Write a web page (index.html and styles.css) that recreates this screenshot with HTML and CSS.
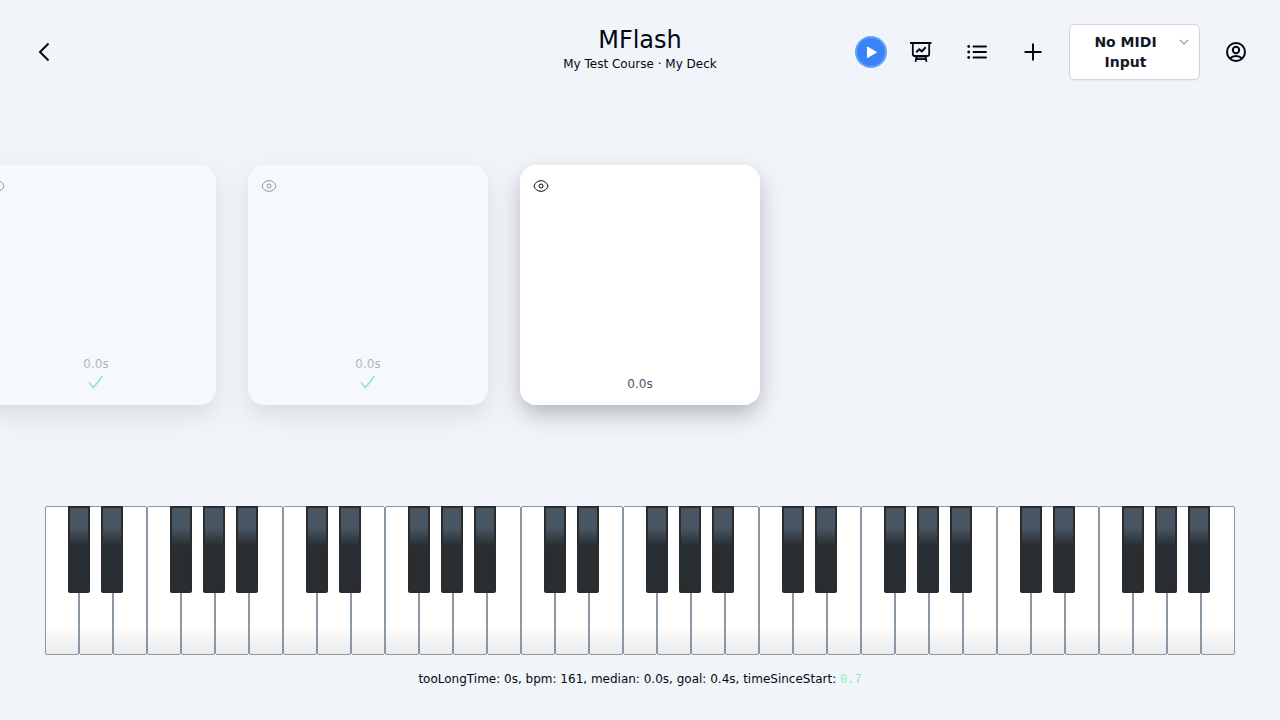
FILE: index.html
```html
<!DOCTYPE html>
<html lang="en">
<head>
<meta charset="utf-8">
<meta name="viewport" content="width=device-width, initial-scale=1">
<title>MFlash</title>
<link rel="stylesheet" href="styles.css">
</head>
<body>
<header class="topbar">
  <div class="topbar-start">
    <a class="icon-button" href="#" aria-label="Back">
      <svg width="24" height="24" viewBox="0 0 24 24" fill="none" stroke="currentColor" stroke-width="2"><path d="M16.500 3.500 8 12l8.500 8.500"/></svg>
    </a>
  </div>
  <div class="titles">
    <h1 class="title">MFlash</h1>
    <p class="subtitle">My Test Course · My Deck</p>
  </div>
  <div class="topbar-end">
    <button class="play-button" type="button" aria-label="Play">
      <svg width="28" height="28" viewBox="0 0 28 28" fill="#fff" stroke="#fff" stroke-width="1" stroke-linejoin="round"><path d="M10.500 9v10.500l9-5.250z"/></svg>
    </button>
    <button class="icon-button" type="button" aria-label="Statistics">
      <svg width="24" height="24" viewBox="0 0 24 24" fill="none" stroke="currentColor" stroke-width="2"><path d="M1 3h21.500"/><path d="M3.800 3v11a2 2 0 0 0 2 2h12.400a2 2 0 0 0 2-2V3" stroke-width="1.800"/><path d="m7.300 12.300 3-3 2.500 2 4-4"/><path d="m7.500 16.500-1 5.300M16.500 16.500l1 5.300M7 19.200h10" stroke-width="1.800"/><path d="M8 16.500h8v2H8z" fill="currentColor" fill-opacity=".5" stroke="none"/></svg>
    </button>
    <button class="icon-button" type="button" aria-label="List">
      <svg width="24" height="24" viewBox="0 0 24 24" fill="none" stroke="currentColor" stroke-width="2"><path d="M8.500 6.500H21M8.500 12H21M8.500 17.500H21" stroke-linecap="round"/><g fill="currentColor" stroke="none"><circle cx="3.700" cy="6.500" r="1.400"/><circle cx="3.700" cy="12" r="1.400"/><circle cx="3.700" cy="17.500" r="1.400"/></g></svg>
    </button>
    <button class="icon-button" type="button" aria-label="Add">
      <svg width="24" height="24" viewBox="0 0 24 24" fill="none" stroke="currentColor" stroke-width="2"><path d="M12 3.500v17M3.500 12h17"/></svg>
    </button>
    <button class="midi-button" type="button" aria-haspopup="listbox">
      <span class="midi-label">No MIDI Input</span>
      <svg class="midi-chevron" width="10" height="20" viewBox="0 0 10 20" fill="none" stroke="currentColor" stroke-width="1.300"><path d="m1 8 4 4 4-4"/></svg>
    </button>
    <button class="icon-button" type="button" aria-label="Account">
      <svg width="24" height="24" viewBox="0 0 24 24" fill="none" stroke="currentColor" stroke-width="2"><circle cx="12" cy="12" r="9"/><circle cx="12" cy="10" r="3.200"/><path d="M6 18.500q2.300-2.500 6-2.500t6 2.500"/></svg>
    </button>
  </div>
</header>

<main class="stage">
  <section class="cards" aria-label="Cards">
    <article class="card card-done">
      <button class="eye-button" type="button" aria-label="Show card"><svg width="16" height="16" viewBox="0 0 16 16" fill="none" stroke="currentColor"><path d="M1 8C2.200 4.500 4.700 2.700 8 2.700S13.800 4.500 15 8C13.800 11.500 11.300 13.300 8 13.300S2.200 11.500 1 8z"/><circle cx="8" cy="8" r="2"/></svg></button>
      <div class="card-result">
        <span>0.0s</span>
        <svg class="check" width="18" height="18" viewBox="-1 0 18 18" fill="none" stroke="currentColor" stroke-width="1.600"><path d="m1 8.500 4.500 5L14.500 2"/></svg>
      </div>
    </article>
    <article class="card card-done">
      <button class="eye-button" type="button" aria-label="Show card"><svg width="16" height="16" viewBox="0 0 16 16" fill="none" stroke="currentColor"><path d="M1 8C2.200 4.500 4.700 2.700 8 2.700S13.800 4.500 15 8C13.800 11.500 11.300 13.300 8 13.300S2.200 11.500 1 8z"/><circle cx="8" cy="8" r="2"/></svg></button>
      <div class="card-result">
        <span>0.0s</span>
        <svg class="check" width="18" height="18" viewBox="-1 0 18 18" fill="none" stroke="currentColor" stroke-width="1.600"><path d="m1 8.500 4.500 5L14.500 2"/></svg>
      </div>
    </article>
    <article class="card">
      <button class="eye-button" type="button" aria-label="Show card"><svg width="16" height="16" viewBox="0 0 16 16" fill="none" stroke="currentColor"><path d="M1 8C2.200 4.500 4.700 2.700 8 2.700S13.800 4.500 15 8C13.800 11.500 11.300 13.300 8 13.300S2.200 11.500 1 8z"/><circle cx="8" cy="8" r="2"/></svg></button>
      <div class="card-result"><span>0.0s</span></div>
    </article>
  </section>
</main>

<footer class="dock">
  <div class="piano" role="group" aria-label="Piano">
    <div class="octave">
      <button class="white" aria-label="C2"></button><button class="white" aria-label="D2"></button><button class="white" aria-label="E2"></button><button class="white" aria-label="F2"></button><button class="white" aria-label="G2"></button><button class="white" aria-label="A2"></button><button class="white" aria-label="B2"></button>
      <div class="blacks"><button class="black" aria-label="C sharp 2"></button><button class="black" aria-label="D sharp 2"></button><button class="black" aria-label="F sharp 2"></button><button class="black" aria-label="G sharp 2"></button><button class="black" aria-label="A sharp 2"></button></div>
    </div>
    <div class="octave">
      <button class="white" aria-label="C3"></button><button class="white" aria-label="D3"></button><button class="white" aria-label="E3"></button><button class="white" aria-label="F3"></button><button class="white" aria-label="G3"></button><button class="white" aria-label="A3"></button><button class="white" aria-label="B3"></button>
      <div class="blacks"><button class="black" aria-label="C sharp 3"></button><button class="black" aria-label="D sharp 3"></button><button class="black" aria-label="F sharp 3"></button><button class="black" aria-label="G sharp 3"></button><button class="black" aria-label="A sharp 3"></button></div>
    </div>
    <div class="octave">
      <button class="white" aria-label="C4"></button><button class="white" aria-label="D4"></button><button class="white" aria-label="E4"></button><button class="white" aria-label="F4"></button><button class="white" aria-label="G4"></button><button class="white" aria-label="A4"></button><button class="white" aria-label="B4"></button>
      <div class="blacks"><button class="black" aria-label="C sharp 4"></button><button class="black" aria-label="D sharp 4"></button><button class="black" aria-label="F sharp 4"></button><button class="black" aria-label="G sharp 4"></button><button class="black" aria-label="A sharp 4"></button></div>
    </div>
    <div class="octave">
      <button class="white" aria-label="C5"></button><button class="white" aria-label="D5"></button><button class="white" aria-label="E5"></button><button class="white" aria-label="F5"></button><button class="white" aria-label="G5"></button><button class="white" aria-label="A5"></button><button class="white" aria-label="B5"></button>
      <div class="blacks"><button class="black" aria-label="C sharp 5"></button><button class="black" aria-label="D sharp 5"></button><button class="black" aria-label="F sharp 5"></button><button class="black" aria-label="G sharp 5"></button><button class="black" aria-label="A sharp 5"></button></div>
    </div>
    <div class="octave">
      <button class="white" aria-label="C6"></button><button class="white" aria-label="D6"></button><button class="white" aria-label="E6"></button><button class="white" aria-label="F6"></button><button class="white" aria-label="G6"></button><button class="white" aria-label="A6"></button><button class="white" aria-label="B6"></button>
      <div class="blacks"><button class="black" aria-label="C sharp 6"></button><button class="black" aria-label="D sharp 6"></button><button class="black" aria-label="F sharp 6"></button><button class="black" aria-label="G sharp 6"></button><button class="black" aria-label="A sharp 6"></button></div>
    </div>
  </div>
  <p class="stats">tooLongTime: 0s, bpm: 161, median: 0.0s, goal: 0.4s, timeSinceStart: <span class="elapsed">0.7</span></p>
</footer>
</body>
</html>
```
FILE: styles.css
```css
* { box-sizing: border-box; }

body {
  margin: 0;
  min-height: 100vh;
  display: flex;
  flex-direction: column;
  overflow-x: hidden;
  background: #f1f5f9;
  color: #030712;
  font-family: "DejaVu Sans", sans-serif;
  font-size: 12px;
  line-height: 16px;
}

h1, p { margin: 0; }

button {
  margin: 0;
  padding: 0;
  border: 0;
  background: none;
  color: inherit;
  font: inherit;
  cursor: pointer;
}

svg { display: block; }

.topbar {
  display: grid;
  grid-template-columns: 1fr auto 1fr;
  align-items: center;
  padding: 24px;
}

.topbar-start { display: flex; }

.titles {
  align-self: start;
  text-align: center;
}

.title {
  font-size: 24px;
  line-height: 32px;
  font-weight: 400;
}

.topbar-end {
  display: flex;
  align-items: center;
  justify-content: flex-end;
  gap: 16px;
}

.icon-button {
  display: flex;
  padding: 8px;
  color: inherit;
}

.play-button {
  border-radius: 50%;
  background: #3b82f6;
  box-shadow: 0 0 0 2px #60a5fa;
}

.midi-button {
  display: flex;
  align-items: flex-start;
  gap: 13px;
  padding: 7px 10px 7px 15px;
  border: 1px solid #d1d5db;
  border-radius: 6px;
  background: #fff;
  box-shadow: 0 1px 2px rgba(0, 0, 0, 0.05);
  color: #111827;
  font-size: 14px;
  line-height: 20px;
  font-weight: 700;
}

.midi-label { width: 81px; }

.midi-chevron { color: #9ca3af; }

.stage {
  flex: 1;
  display: flex;
  flex-direction: column;
  justify-content: center;
  padding: 40px 0 80px;
}

.cards {
  display: flex;
  justify-content: flex-end;
  gap: 32px;
  padding-right: calc(50% - 120px);
}

.card {
  flex: none;
  display: flex;
  flex-direction: column;
  justify-content: space-between;
  width: 240px;
  height: 240px;
  padding: 12px 12px 13px;
  border-radius: 16px;
  background: #fff;
  box-shadow: 0 10px 24px -2px rgba(0, 0, 0, 0.28);
}

.card-done {
  opacity: 0.4;
  background: #fcffff;
}

.eye-button {
  align-self: flex-start;
  padding: 1px;
}

.card-result {
  display: flex;
  flex-direction: column;
  align-items: center;
  gap: 2px;
  color: #4b5563;
}

.check { color: #16cc58; }

.dock {
  display: flex;
  flex-direction: column;
  gap: 16px;
  padding: 0 45px 32px;
}

.piano { display: flex; }

.octave {
  position: relative;
  flex: 1;
  display: flex;
}

.white {
  flex: 1;
  height: 149px;
  border: 1px solid #8a98a5;
  border-radius: 2px;
  background: linear-gradient(#fff 80%, #ececec);
}

.blacks {
  position: absolute;
  inset: 0 0 auto;
  display: grid;
  grid-template-columns: 23fr 22fr 11fr 22fr 47fr 22fr 11fr 22fr 11fr 22fr 25fr;
}

.black {
  height: 87px;
  border: 2px solid #2b2b2b;
  border-radius: 0 0 2px 2px;
  background: linear-gradient(#485663 24%, #282d31 46%);
}

.black:nth-child(1) { grid-column: 2; }
.black:nth-child(2) { grid-column: 4; }
.black:nth-child(3) { grid-column: 6; }
.black:nth-child(4) { grid-column: 8; }
.black:nth-child(5) { grid-column: 10; }

.stats { text-align: center; }

.elapsed {
  color: #86efac;
  font-family: "Liberation Mono", monospace;
}
```
